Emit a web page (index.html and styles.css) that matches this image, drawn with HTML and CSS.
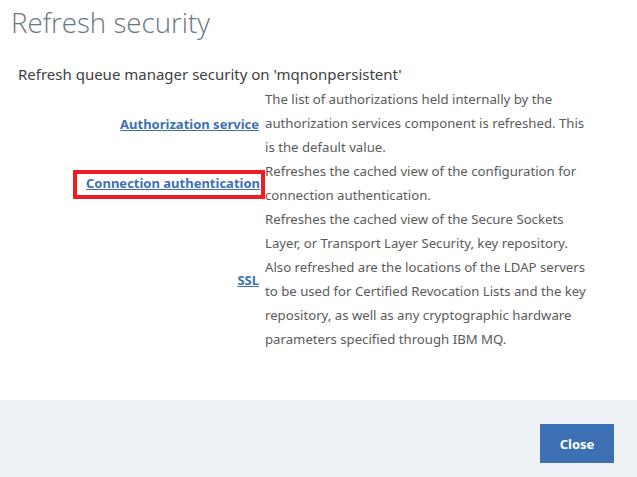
FILE: index.html
```html
<!DOCTYPE html>
<html lang="en">
<head>
<meta charset="utf-8">
<title>Refresh security</title>
<link rel="stylesheet" href="styles.css">
</head>
<body>
<div class="dialog">
  <div class="body">
    <h1 class="title">Refresh security</h1>
    <p class="intro">Refresh queue manager security on 'mqnonpersistent'</p>
    <div class="options">
      <div class="label"><a href="#" class="link">Authorization service</a></div>
      <div class="desc">The list of authorizations held internally by the authorization services component is refreshed. This is the default value.</div>
      <div class="label"><a href="#" class="link highlight">Connection authentication</a></div>
      <div class="desc">Refreshes the cached view of the configuration for connection authentication.</div>
      <div class="label"><a href="#" class="link">SSL</a></div>
      <div class="desc">Refreshes the cached view of the Secure Sockets Layer, or Transport Layer Security, key repository. Also refreshed are the locations of the LDAP servers to be used for Certified Revocation Lists and the key repository, as well as any cryptographic hardware parameters specified through IBM MQ.</div>
    </div>
  </div>
  <div class="footer">
    <button class="btn">Close</button>
  </div>
</div>
</body>
</html>
```
FILE: styles.css
```css
* { box-sizing: border-box; }
html, body { margin: 0; padding: 0; }
body {
  font-family: "Noto Sans", "Open Sans", sans-serif;
  background: #ffffff;
  color: #5a5a5a;
}
.dialog {
  display: flex;
  flex-direction: column;
  height: 477px;
}
.body {
  flex: 1;
  padding: 5px 0 0 0;
}
.title {
  margin: 0 0 0 11px;
  font-family: "Open Sans", "Noto Sans", sans-serif;
  font-weight: 300;
  font-size: 27.7px;
  line-height: 34px;
  color: #6a7782;
}
.intro {
  margin: 23px 0 0 18px;
  font-size: 15px;
  line-height: 24px;
  color: #404040;
}
.options {
  margin-top: 1px;
  display: grid;
  grid-template-columns: 259px 326px;
  column-gap: 6px;
  align-items: center;
}
.label {
  text-align: right;
}
.link {
  color: #3d70b2;
  font-weight: 700;
  font-size: 13px;
  text-decoration: underline;
}
.highlight {
  outline: 4px solid #ee1c24;
  display: inline-block;
  padding: 0 1px 2px 9px;
  margin-right: -2px;
  line-height: 19px;
}
.desc {
  font-size: 13.2px;
  line-height: 24px;
  color: #5a5a5a;
}
.footer {
  height: 77px;
  background: #eef2f6;
  display: flex;
  justify-content: flex-end;
  align-items: flex-start;
  padding: 24px 23px 0 0;
}
.btn {
  width: 74px;
  height: 39px;
  border: 0;
  background: #3d70b2;
  color: #ffffff;
  font-family: "Noto Sans", "Open Sans", sans-serif;
  font-weight: 700;
  font-size: 13px;
  padding: 0;
}
```
